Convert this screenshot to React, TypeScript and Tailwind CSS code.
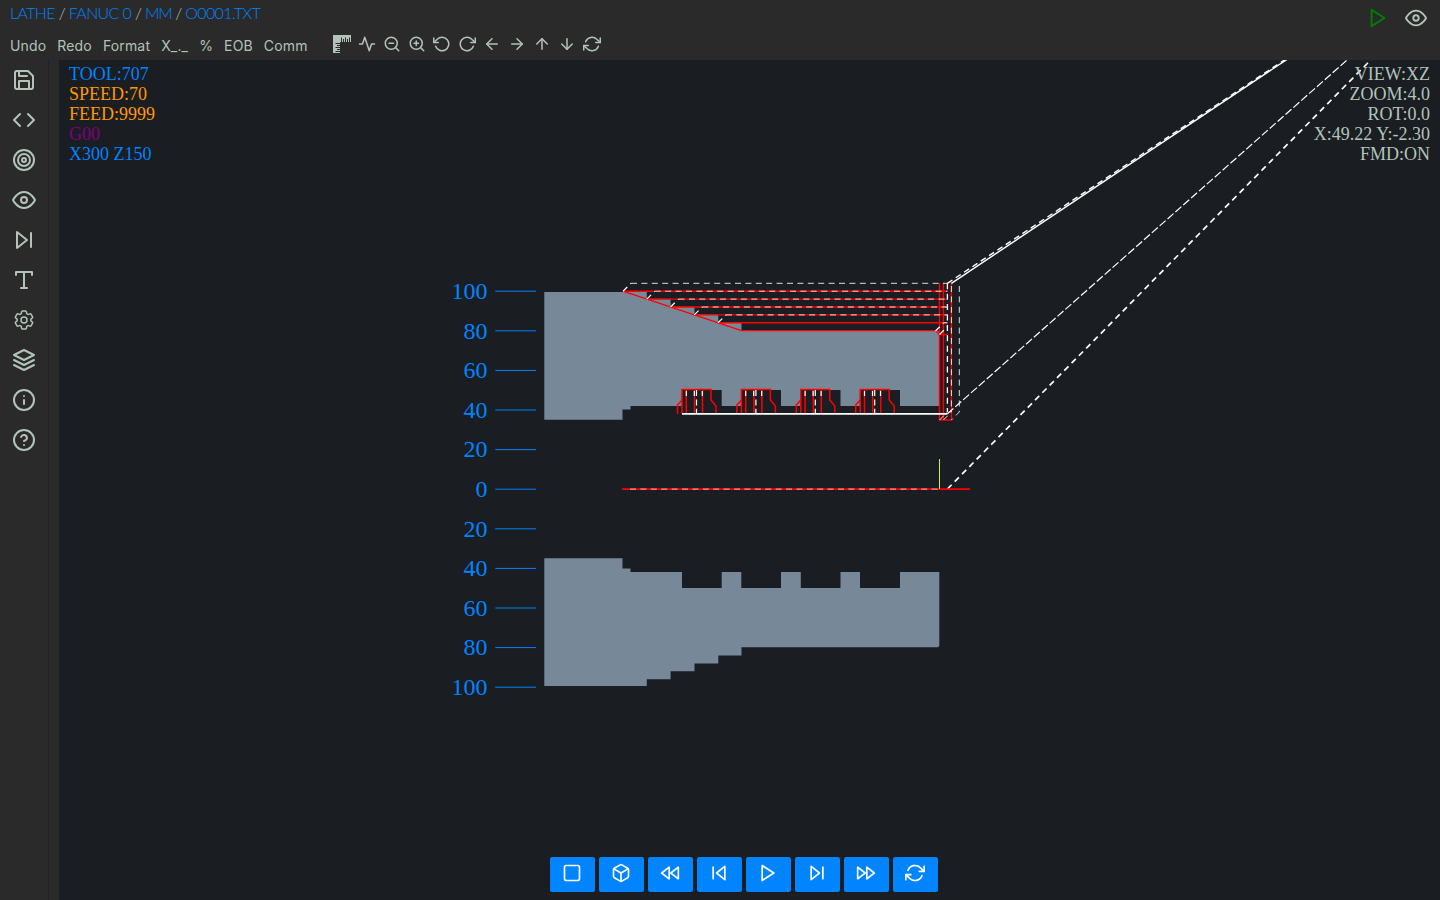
import type { ReactNode } from "react";
import {
  FiSave, FiCode, FiTarget, FiEye, FiSkipForward, FiSkipBack, FiType, FiLayers, FiInfo, FiHelpCircle,
  FiActivity, FiZoomOut, FiZoomIn, FiRotateCcw, FiRotateCw, FiArrowLeft, FiArrowRight, FiArrowUp,
  FiArrowDown, FiRefreshCw, FiPlay, FiSquare, FiBox, FiRewind, FiFastForward,
} from "react-icons/fi";
import { HiOutlineCog6Tooth } from "react-icons/hi2";

const menu = ["Undo", "Redo", "Format", "X_._", "%", "EOB", "Comm"];
const crumbs = [
  { text: "LATHE", className: "" },
  { text: "FANUC 0", className: "" },
  { text: "MM", className: "tracking-[-1.4px]" },
  { text: "O0001.TXT", className: "" },
];

function RulerIcon() {
  return (
    <svg width="18" height="18" viewBox="0 0 18 18" fill="currentColor">
      <path d="M0 0H18V7H17V2.5H16V7H15V4H14V7H13V2.5H12V7H11V4H10V7H9V2.5H8V7H7V8H2.5V9H7V10H4V11H7V12H2.5V13H7V14H4V15H7V16H2.5V17H7V18H0Z" />
    </svg>
  );
}

const tools = [FiActivity, FiZoomOut, FiZoomIn, FiRotateCcw, FiRotateCw, FiArrowLeft, FiArrowRight, FiArrowUp, FiArrowDown, FiRefreshCw];
const side = [FiSave, FiCode, FiTarget, FiEye, FiSkipForward, FiType, HiOutlineCog6Tooth, FiLayers, FiInfo, FiHelpCircle];
const player = [FiSquare, FiBox, FiRewind, FiSkipBack, FiPlay, FiSkipForward, FiFastForward, FiRefreshCw];

const ticks = [100, 80, 60, 40, 20, 0, -20, -40, -60, -80, -100];
const grooves = [682, 741.4, 800.8, 860.2];
const passes = [
  { x: 623, y: 291.2 },
  { x: 646.8, y: 299.1 },
  { x: 670.5, y: 307 },
  { x: 694.3, y: 314.9 },
  { x: 718, y: 322.8 },
];

const part =
  "M544.3 686V558.2H622.5V568.5H630.5V572H682V588H721.7V572H741.3V588H781V572H800.8V588H840.5V572H860V588H900V572H939.3V646L938 647.3H741.5V655.5H718.3V663.4H694.5V671.3H670.6V679.3H646.8V686Z";

function Plot() {
  return (
    <svg className="block h-full w-full" viewBox="59 60 1381 840" fill="none">
      <path d={part} fill="#778899" />
      <path d={part} fill="#778899" transform="matrix(1 0 0 -1 0 978)" />
      {ticks.map((t) => (
        <g key={t}>
          <path d={`M495.3 ${489.2 - t * 1.98}H536`} stroke="#0084ff" strokeWidth="1" />
          <text x="487.4" y={497 - t * 1.98} textAnchor="end" fill="#0084ff" fontSize="24" fontFamily="Liberation Serif, serif">
            {Math.abs(t)}
          </text>
        </g>
      ))}
      <g stroke="#ff0000" strokeWidth="1.4">
        {passes.map((p) => <path key={p.x} d={`M${p.x} ${p.y}H947.4`} />)}
        <path d="M623 291.2L741.5 330.6H935.5L939.5 334.5H947.4" />
        <path d="M939.5 283.3V420H951.4V283.3M943.4 283.3V420" />
      </g>
      <g stroke="#ffffff" strokeWidth="1" strokeDasharray="6 4.4">
        {passes.map((p) => (
          <g key={p.x}>
            <path d={`M${p.x} ${p.y}L${p.x + 8} ${p.y - 7.9}`} strokeWidth="1.2" />
            <path d={`M${p.x + 8} ${p.y - 7.9}H947.4`} strokeOpacity="0.85" />
          </g>
        ))}
        <path d="M943.4 322.8H947.4" />
        <path d="M947.4 283.3V412" strokeWidth="1.3" />
        <path d="M951.4 286V412M959.3 286V412L951.4 420M943.4 420L951.4 412M939.5 420L947.4 412" strokeOpacity="0.85" />
        <path d="M935.5 331L943.4 323M939.5 334.5L947.4 326.6" strokeWidth="1.2" />
      </g>
      {grooves.map((g) => (
        <g key={g}>
          <path d={`M${g} 414V389.6H${g + 29}V400L${g + 34} 406V414M${g} 400L${g - 4.5} 405V414M${g + 4.3} 390V414M${g + 12.5} 390V414M${g + 20.5} 390V414`} stroke="#ff0000" strokeWidth="1.5" />
          <path d={`M${g + 4.3} 391V396M${g + 12.3} 391V396M${g + 20.3} 391V396M${g + 14.5} 390V414`} stroke="#ffffff" strokeWidth="1.2" strokeDasharray="6 3.4" />
        </g>
      ))}
      <g stroke="#ffffff">
        <path d="M682 413.8H947.4" strokeWidth="1.8" />
        <path d="M951.4 283.3L1533.5 -105" strokeWidth="1.4" />
        <path d="M947.4 283.3L1533.5 -105" strokeWidth="1.4" strokeDasharray="6 4" />
        <path d="M947.4 413.8L1533.5 -105" strokeWidth="1.2" strokeDasharray="8 2.5" />
        <path d="M947.4 489L1533.5 -105" strokeWidth="1.7" strokeDasharray="6 4.4" />
      </g>
      <path d="M622 489.1H970" stroke="#ff0000" strokeWidth="1.7" />
      <path d="M630 489.1H939" stroke="#ffffff" strokeOpacity="0.75" strokeDasharray="6 4.4" />
      <path d="M939.5 459V489" stroke="#d8f020" />
    </svg>
  );
}

function Line({ className, children }: { className?: string; children: ReactNode }) {
  return <div className={className}>{children}</div>;
}

export default function App() {
  return (
    <div className="flex h-[900px] w-[1440px] flex-col overflow-hidden bg-[#2a2a2a] text-[#b2c4b9]">
      <header className="flex h-[60px] shrink-0 justify-between">
        <div className="flex flex-col pl-[10px]">
          <nav className="flex h-7 gap-1 whitespace-pre font-['Lato'] text-[16px] font-light leading-[26px] tracking-[-0.65px] text-[#0084ff]">
            {crumbs.map((c, i) => (
              <span key={c.text}>
                {i > 0 && <span className="text-[#b2c4b9]">/ </span>}
                <span className={c.className}>{c.text}</span>
              </span>
            ))}
          </nav>
          <div className="flex h-8 items-center">
            <div className="flex gap-[11px] pt-[3px] font-['Inter'] text-[14px] tracking-[0.16px]">
              {menu.map((m) => <span key={m}>{m}</span>)}
            </div>
            <div className="ml-[25px] flex items-center gap-[7px]">
              <RulerIcon />
              {tools.map((Icon, i) => <Icon key={i} size={18} strokeWidth={2} />)}
            </div>
          </div>
        </div>
        <div className="flex h-9 items-center gap-4 pr-[13px]">
          <FiPlay size={22} strokeWidth={2} className="text-[#008000]" />
          <FiEye size={22} strokeWidth={2} />
        </div>
      </header>
      <div className="flex min-h-0 flex-1">
        <aside className="flex w-[49px] shrink-0 flex-col items-center gap-4 border-r border-[#1f2229] pt-2">
          {side.map((Icon, i) => <Icon key={i} size={24} />)}
        </aside>
        <main className="relative ml-[10px] min-w-0 flex-1 bg-[#1a1d21]">
          <Plot />
          <div className="absolute left-[10px] top-1 font-['Liberation_Serif'] text-[18px] leading-5 text-[#0084ff]">
            <Line>TOOL:707</Line>
            <Line className="text-[#ff9800]">SPEED:70</Line>
            <Line className="text-[#ff9800]">FEED:9999</Line>
            <Line className="text-[#800080]">G00</Line>
            <Line>X300 Z150</Line>
          </div>
          <div className="absolute right-[10px] top-1 text-right font-['Liberation_Serif'] text-[18px] leading-5">
            <Line>VIEW:XZ</Line>
            <Line>ZOOM:4.0</Line>
            <Line>ROT:0.0</Line>
            <Line>X:49.22 Y:-2.30</Line>
            <Line>FMD:ON</Line>
          </div>
          <div className="absolute bottom-2 left-[491.4px] flex gap-1">
            {player.map((Icon, i) => (
              <button key={i} className="flex h-[35px] w-[45px] items-center justify-center rounded-xs bg-[#0084ff] pb-[3px] pr-px text-white">
                <Icon size={20} strokeWidth={2} />
              </button>
            ))}
          </div>
        </main>
      </div>
    </div>
  );
}
